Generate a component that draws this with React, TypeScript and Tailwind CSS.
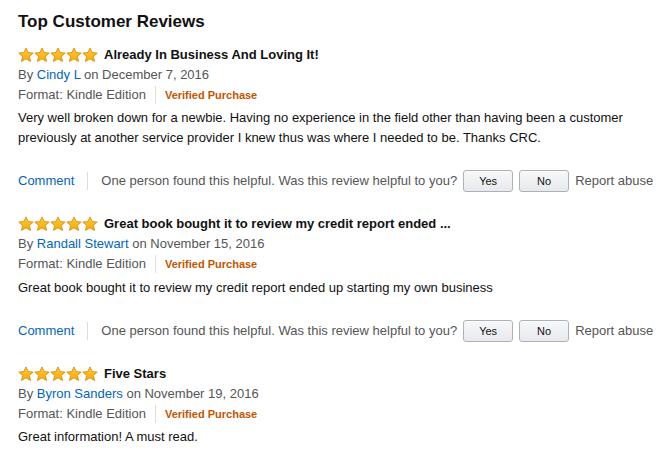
import React from "react";

const Star = () => (
  <svg width="16" height="16" viewBox="0 0 24 24" className="block">
    <defs>
      <linearGradient id="sg" x1="0" y1="0" x2="0" y2="1">
        <stop offset="0%" stopColor="#FFCE3D" />
        <stop offset="100%" stopColor="#F7A800" />
      </linearGradient>
    </defs>
    <path
      d="M12 1.4l3.2 7 7.6.7-5.8 5.1 1.8 7.5L12 17.8l-6.8 3.9 1.8-7.5-5.8-5.1 7.6-.7z"
      fill="url(#sg)"
      stroke="#D98A0A"
      strokeWidth="1.3"
      strokeLinejoin="round"
    />
  </svg>
);

const Stars = () => (
  <div className="flex items-center">
    {[0, 1, 2, 3, 4].map((i) => (
      <Star key={i} />
    ))}
  </div>
);

type Review = {
  title: string;
  author: string;
  date: string;
  body: string;
  helpful?: boolean;
  bodyMt: string;
};

const reviews: Review[] = [
  {
    title: "Already In Business And Loving It!",
    author: "Cindy L",
    date: "December 7, 2016",
    body: "Very well broken down for a newbie. Having no experience in the field other than having been a customer previously at another service provider I knew thus was where I needed to be. Thanks CRC.",
    helpful: true,
    bodyMt: "mt-[3px]",
  },
  {
    title: "Great book bought it to review my credit report ended ...",
    author: "Randall Stewart",
    date: "November 15, 2016",
    body: "Great book bought it to review my credit report ended up starting my own business",
    helpful: true,
    bodyMt: "mt-[4px]",
  },
  {
    title: "Five Stars",
    author: "Byron Sanders",
    date: "November 19, 2016",
    body: "Great information! A must read.",
    bodyMt: "mt-[3px]",
  },
];

const Btn = ({ label }: { label: string }) => (
  <button className="h-[22px] w-[50px] shrink-0 rounded-[3px] border border-[#adb1b8] bg-gradient-to-b from-[#f7f8fa] to-[#e7e9ec] text-[11px] text-[#111] leading-none shadow-[0_1px_0_rgba(255,255,255,0.6)_inset]">
    {label}
  </button>
);

export default function App() {
  return (
    <div
      className="w-[664px] h-[465px] bg-white pl-[18px] pr-[4px] pt-[11px] text-[13px] text-[#111] overflow-hidden"
      style={{ fontFamily: '"Liberation Sans", Arial, sans-serif' }}
    >
      <h2 className="text-[17px] font-bold leading-[21px] text-[#111]">Top Customer Reviews</h2>
      <div className="mt-[13px] flex flex-col">
        {reviews.map((r, idx) => (
          <div key={idx} className={idx > 0 ? "mt-[22px]" : ""}>
            <div className="flex items-center h-[20px]">
              <Stars />
              <span className="ml-[6px] font-bold text-[13px] text-[#111] whitespace-nowrap">{r.title}</span>
            </div>
            <div className="h-[20px] leading-[20px] text-[#555]">
              By <span className="text-[#0066c0]">{r.author}</span> on {r.date}
            </div>
            <div className="h-[20px] flex items-center text-[#555]">
              <span>Format: Kindle Edition</span>
              <span className="mx-[9px] h-[18px] w-px bg-[#ddd]" />
              <span className="text-[11px] font-bold text-[#c45500]">Verified Purchase</span>
            </div>
            <p className={`${r.bodyMt} w-[630px] leading-[20px] text-[#111]`}>{r.body}</p>
            {r.helpful && (
              <div className="mt-[22px] flex items-center h-[22px] text-[#555] whitespace-nowrap">
                <span className="text-[#0066c0]">Comment</span>
                <span className="ml-[13px] mr-[13px] h-[18px] w-px bg-[#ddd]" />
                <span>One person found this helpful. Was this review helpful to you?</span>
                <span className="ml-[6px] flex gap-[6px]">
                  <Btn label="Yes" />
                  <Btn label="No" />
                </span>
                <span className="ml-[6px]">Report abuse</span>
              </div>
            )}
          </div>
        ))}
      </div>
    </div>
  );
}
